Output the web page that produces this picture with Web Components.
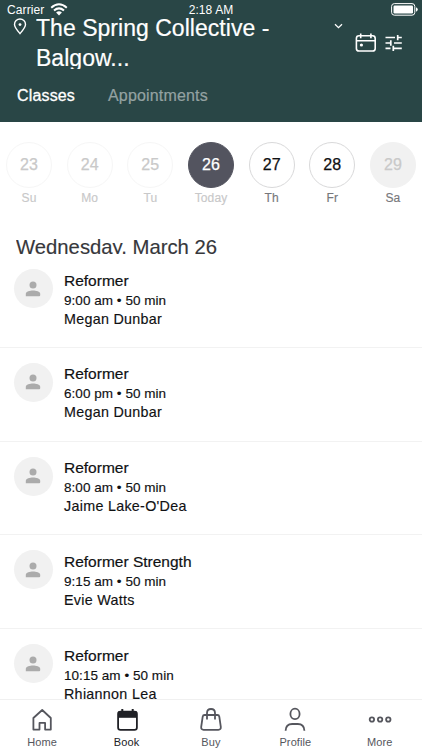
<!DOCTYPE html>
<html lang="en"><head><meta charset="utf-8"><title>Book</title>
<style>
html,body{margin:0;height:100%;overflow:hidden;background:#fff}
body{font-family:"Liberation Sans",Arial,sans-serif;color:#101113}
</style></head><body>
<booking-app></booking-app>
<script>
const define=(name,html,setup)=>customElements.define(name,class extends HTMLElement{
  constructor(){super();this.attachShadow({mode:'open'});}
  connectedCallback(){this.shadowRoot.innerHTML=html;if(setup)setup(this,this.shadowRoot);}
});

define('status-bar',`<style>
:host{display:grid;grid-template-columns:1fr auto 1fr;align-items:center;height:19px;color:#fff;font-size:12px;line-height:14px}
.l{display:flex;align-items:center;gap:6px;padding-left:7px;letter-spacing:.1px}.t{letter-spacing:.1px}
.b{justify-self:end;margin-right:4px}svg{display:block}
</style><div class="l"><span>Carrier</span><svg width="18" height="13" viewBox="0 0 18 13" fill="none" stroke="#fff" stroke-width="2"><path d="M1.2 4.7Q9-2.2 16.8 4.7M4 7.6Q9 3.2 14 7.6"/><path d="M6.1 9.4Q9 7.2 11.9 9.4L9 12.4Z" fill="#fff" stroke="none"/></svg></div>
<span class="t">2:18 AM</span>
<svg class="b" width="27" height="13" viewBox="0 0 27 13"><rect x=".6" y=".6" width="23.2" height="11.6" rx="2.8" fill="none" stroke="#fff"/><rect x="2.5" y="2.5" width="19.5" height="8" rx="1.2" fill="#fff"/><path d="M25 4.2Q26.8 5 26.8 6.5Q26.8 8 25 8.7Z" fill="#fff"/></svg>`);

define('studio-header',`<style>
:host{display:block;height:122px;box-sizing:border-box;background:#294646;color:#fff;overflow:hidden}
svg{display:block;flex:none}
.place{display:flex;align-items:flex-start;height:52px}
.pin{margin:-1px 0 0 13px}
.name{width:240px;margin-left:9px;margin-top:-6px;height:56px;overflow:hidden;font-size:23px;line-height:30px;letter-spacing:.03px;-webkit-text-stroke:.2px #fff}
.chev{margin:4px 0 0 58px}
.cal{margin:14px 0 0 12px}.tune{margin:15px 0 0 7.5px}
nav{display:flex;gap:33px;padding:14px 0 0 17px;font-size:16px;line-height:22px;letter-spacing:.16px}
.on{-webkit-text-stroke:.3px #fff}.off{color:#94a2a2;-webkit-text-stroke:.2px #94a2a2}
</style><status-bar></status-bar>
<div class="place"><svg class="pin" width="14" height="17" viewBox="0 0 14 17"><path d="M7 15.6C4.2 12.4 1.5 9.2 1.5 6.5a5.5 5.5 0 0 1 11 0C12.5 9.2 9.8 12.4 7 15.6Z" fill="none" stroke="#fff" stroke-width="1.4"/><circle cx="7" cy="6.6" r="1.4" fill="#fff"/></svg>
<div class="name">The Spring Collective - Balgow...</div>
<svg class="chev" width="9" height="6" viewBox="0 0 9 6" fill="none" stroke="#fff" stroke-width="1.3"><path d="M1 1.2 4.5 4.6 8 1.2"/></svg>
<svg class="cal" width="22" height="20" viewBox="0 0 22 20" fill="none" stroke="#fff" stroke-width="1.6"><rect x="1.4" y="2.8" width="18.8" height="15.2" rx="2.6"/><path d="M1.4 7.8H20.2M5.7.5V5.2M15.9.5V5.2"/><circle cx="6.4" cy="12" r="1.6" fill="#fff" stroke="none"/></svg>
<svg class="tune" width="18" height="18" viewBox="0 0 18 18" fill="none" stroke="#fff" stroke-width="1.7"><path d="M.5 3.5H10M13 3.5H16.8M12.7.9V6.2M.5 9H5.8M9 9H16.8M5.8 6.3V11.7M.5 14.4H5.5M8.4 14.4H16.8M8.3 11.8V17"/></svg></div>
<nav><span class="on">Classes</span><span class="off">Appointments</span></nav>`);

define('day-pill',`<style>
:host{display:flex;flex-direction:column;align-items:center;color:#101113}
.c{box-sizing:border-box;width:46px;height:46px;border:1px solid #d9d9da;border-radius:50%;display:grid;place-items:center;font-size:16px;letter-spacing:.1px}
.c span{-webkit-text-stroke:.25px currentColor}
small{font-size:12px;line-height:14px;margin-top:3px;letter-spacing:.1px;-webkit-text-stroke:.15px currentColor;color:#77777b}
:host([kind=past]) .c{border-color:#f6f6f6;color:#c9c9c9}
:host([kind=past]) small,:host([kind=today]) small{color:#c8c8c9}
:host([kind=today]) .c{background:#53545f;border-color:#53545f;color:#fff}
:host([kind=full]) .c{background:#f1f1f1;border-color:#f1f1f1;color:#c9c9c9}
</style><div class="c"><span><slot></slot></span></div><small></small>`,(h,r)=>{r.querySelector('small').textContent=h.getAttribute('day')});

define('week-strip',`<style>
:host{display:grid;grid-template-columns:repeat(7,60.67px);margin-left:-1.3px;padding-top:19.5px;height:93px}
</style><day-pill kind="past" day="Su">23</day-pill><day-pill kind="past" day="Mo">24</day-pill><day-pill kind="past" day="Tu">25</day-pill><day-pill kind="today" day="Today">26</day-pill><day-pill day="Th">27</day-pill><day-pill day="Fr">28</day-pill><day-pill kind="full" day="Sa">29</day-pill>`);

define('class-row',`<style>
:host{display:flex;box-sizing:border-box;height:93.75px;padding:15px 0 0 13.5px;border-bottom:1px solid #f2f2f2}
.a{width:39px;height:39px;border-radius:50%;background:#f1f1f1;display:grid;place-items:center;flex:none}
.x{margin:1.7px 0 0 11.5px;white-space:nowrap}
.n{font-size:15.5px;line-height:20px;-webkit-text-stroke:.2px currentColor}
.t{font-size:13.5px;line-height:18px;letter-spacing:.04px;margin-top:1px;-webkit-text-stroke:.15px currentColor}
.p{font-size:14.3px;line-height:19px;letter-spacing:.3px;-webkit-text-stroke:.15px currentColor}
</style><div class="a"><svg width="16" height="16" viewBox="0 0 16 16" fill="#ababab"><circle cx="8" cy="4.1" r="3.5"/><path d="M.8 15.2V12.8C.8 10.2 5 9.4 8 9.4S15.2 10.2 15.2 12.8V14.2Q15.2 15.2 14.2 15.2Z"/></svg></div>
<div class="x"><div class="n"><slot></slot></div><div class="t"></div><div class="p"></div></div>`,(h,r)=>{r.querySelector('.t').textContent=h.getAttribute('time');r.querySelector('.p').textContent=h.getAttribute('teacher')});

define('tab-item',`<style>
:host{display:flex;flex-direction:column;align-items:center;color:#55565d;font-size:11px}
.i{height:25px;margin-top:6.7px}.l{line-height:14px;margin-top:3.6px;letter-spacing:.1px}
:host([active]){color:#202126}
::slotted(svg){display:block}
</style><div class="i"><slot></slot></div><div class="l"></div>`,(h,r)=>{r.querySelector('.l').textContent=h.getAttribute('label')});

define('tab-bar',`<style>
:host{display:grid;grid-template-columns:repeat(5,1fr);box-sizing:border-box;height:51px;background:#fff;border-top:1px solid #f0f0f0}
svg{fill:none;stroke:currentColor;stroke-width:1.8}
</style>
<tab-item label="Home"><svg width="24" height="25" viewBox="0 0 24 25"><path d="M3.4 11 12.2 3l8.6 8V22.6H15.1V15.9H9.5V22.6H3.4Z" stroke-linejoin="round"/></svg></tab-item>
<tab-item active label="Book"><svg width="24" height="25" viewBox="0 0 24 25"><rect x="3.1" y="4.6" width="18.8" height="18.2" rx="2.4"/><path d="M3.1 4.6H21.9V10.8H3.1Z" fill="currentColor" stroke="none"/><path d="M7.3 2V6M17.7 2V6" stroke-width="2"/></svg></tab-item>
<tab-item label="Buy"><svg width="24" height="25" viewBox="0 0 24 25"><path d="M5.6 8H18.4Q20 8 20.3 9.6L21.8 19.8Q22.1 22.8 19.4 22.8H4.6Q1.9 22.8 2.2 19.8L3.7 9.6Q4 8 5.6 8ZM8 12.6V6Q8 2 12 2T16 6V12.6"/></svg></tab-item>
<tab-item label="Profile"><svg width="24" height="25" viewBox="0 0 24 25"><ellipse cx="12" cy="6.9" rx="4.6" ry="5.2"/><path d="M2.6 23.8Q2.8 17 9.2 17H14.8Q21.2 17 21.4 23.8"/></svg></tab-item>
<tab-item label="More"><svg width="24" height="25" viewBox="0 0 24 25"><circle cx="3.9" cy="12.5" r="2.2"/><circle cx="12.1" cy="12.5" r="2.2"/><circle cx="20.3" cy="12.5" r="2.2"/></svg></tab-item>`);

define('booking-app',`<style>
:host{display:flex;flex-direction:column;height:750px;overflow:hidden}
studio-header,week-strip,tab-bar,h1{flex:none}
h1{margin:0 0 0 16px;height:19.5px;line-height:25px;overflow:hidden;font-size:20.3px;font-weight:400;color:#36373b;-webkit-text-stroke:.15px #36373b}
main{flex:1;min-height:0;overflow:hidden}
</style><studio-header></studio-header><week-strip></week-strip><h1>Wednesday, March 26</h1>
<main>
<class-row time="9:00 am • 50 min" teacher="Megan Dunbar">Reformer</class-row>
<class-row time="6:00 pm • 50 min" teacher="Megan Dunbar">Reformer</class-row>
<class-row time="8:00 am • 50 min" teacher="Jaime Lake-O'Dea">Reformer</class-row>
<class-row time="9:15 am • 50 min" teacher="Evie Watts">Reformer Strength</class-row>
<class-row time="10:15 am • 50 min" teacher="Rhiannon Lea">Reformer</class-row>
</main><tab-bar></tab-bar>`);
</script></body></html>
